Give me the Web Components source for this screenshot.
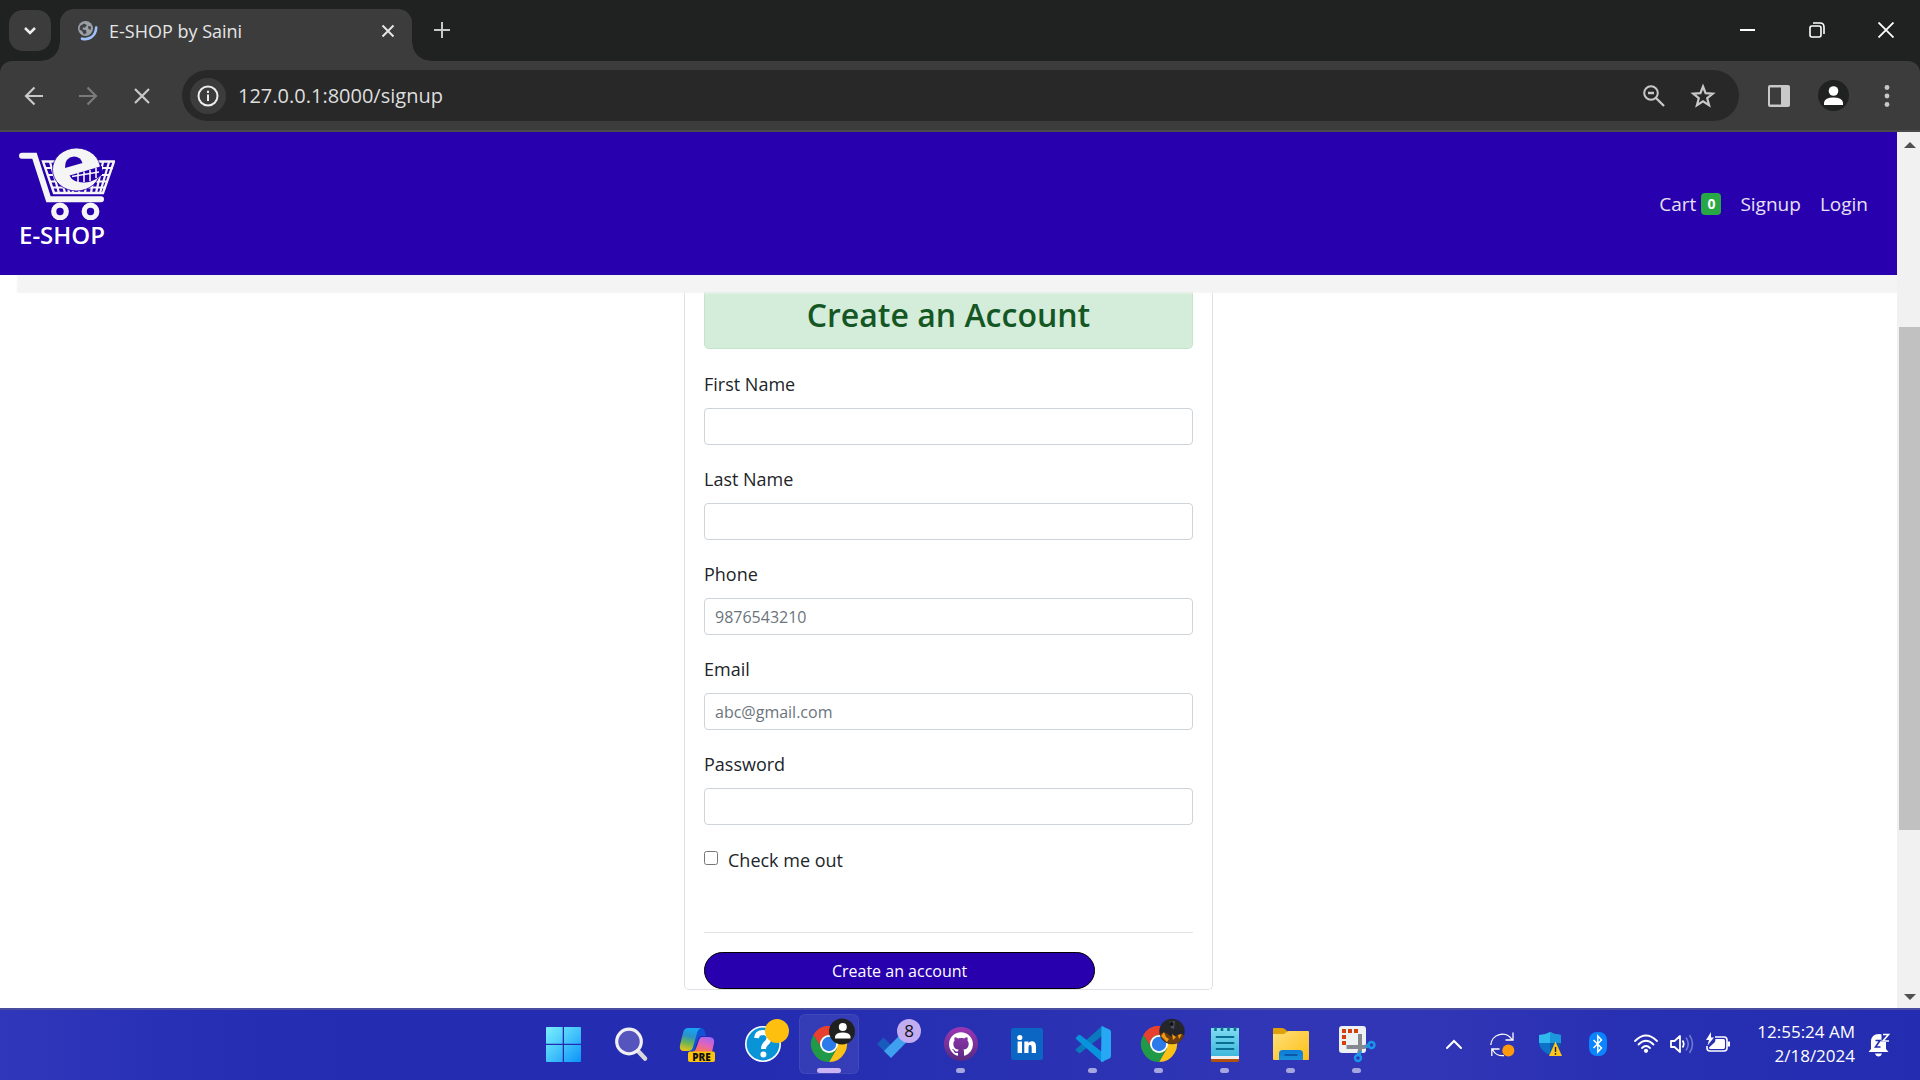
<!DOCTYPE html>
<html lang="en">
<head>
<meta charset="utf-8">
<title>E-SHOP by Saini</title>
<style>
html, body { height: 100%; margin: 0; }
body { font-family: "Open Sans", "Noto Sans", sans-serif; color: #212529; background: #fff; overflow: hidden; }
</style>
</head>
<body>
<desktop-screen></desktop-screen>
<script>
const define = (name, css, html, setup) => customElements.define(name, class extends HTMLElement {
  connectedCallback() {
    if (this.shadowRoot) return;
    const t = document.createElement('template');
    const attrs = k => this.getAttribute(k) || '';
    t.innerHTML = `<style>*{box-sizing:border-box}button{font:inherit;color:inherit;background:none;border:0;padding:0;margin:0}svg{display:block}${css}</style>` +
      (typeof html === 'function' ? html(attrs) : html);
    this.attachShadow({ mode: 'open' }).append(t.content.cloneNode(true));
    if (setup) setup(this);
  }
});

/* ---------- icons ---------- */
const chromeLogo = `
  <path d="M30 30 14.400 21A18 18 0 0 1 45.600 21Z" fill="#e8402f"/>
  <path d="M30 21H45.600A18 18 0 0 1 30 48L37.800 34.500Z" fill="#fbc116"/>
  <path d="M22.200 34.500 14.400 21A18 18 0 0 0 30 48L37.800 34.500Z" fill="#219a48"/>
  <path d="M14.400 21 22.200 34.500 30 21Z" fill="#219a48"/>
  <path d="M14.400 21A18 18 0 0 1 45.600 21H30A9 9 0 0 0 22.200 25.500L21 31Z" fill="#e8402f"/>
  <circle cx="30" cy="30" r="9" fill="#fff"/><circle cx="30" cy="30" r="7.200" fill="#2b7bea"/>`;

const apps = {
  start: `<defs><linearGradient id="g" gradientUnits="userSpaceOnUse" x1="11" y1="13" x2="46" y2="48"><stop stop-color="#7bf0ff"/><stop offset=".5" stop-color="#45c4fb"/><stop offset="1" stop-color="#0a93f8"/></linearGradient></defs>
    <path fill="url(#g)" d="M12 13H27.700V29.700H11V14Q11 13 12 13ZM29 13H45Q46 13 46 14V29.700H29ZM11 31H27.700V48H12Q11 48 11 47ZM29 31H46V47Q46 48 45 48H29Z"/>`,
  search: `<path d="M37 37 44 44.500" stroke="#d8d8dc" stroke-width="4.500" stroke-linecap="round"/><circle cx="28" cy="27.500" r="12.300" fill="#5654bd" stroke="#f0f0f2" stroke-width="3.200"/>`,
  copilot: `<defs><linearGradient id="a" x1=".5" y1="0" x2=".3" y2="1"><stop stop-color="#16a5f5"/><stop offset=".35" stop-color="#2b93c8"/><stop offset=".65" stop-color="#6cb455"/><stop offset="1" stop-color="#e8c51a"/></linearGradient>
    <linearGradient id="b" x1=".7" y1="0" x2=".3" y2="1"><stop stop-color="#a565f5"/><stop offset=".5" stop-color="#e264b8"/><stop offset="1" stop-color="#ff7a4a"/></linearGradient></defs>
    <path d="M28 14H34Q37 14 38 18L39 22H35Q32 22 31 25L27 37H22Z" fill="#1253d6"/>
    <path d="M21 14H34Q31 15 30 19L26 33Q25 37 21 37H17Q12 37 13 31L16 19Q17 14 21 14Z" fill="url(#a)"/>
    <path d="M35 23H42Q48 23 47 29L45 38H26Q29 36 30 32L32 26Q33 23 35 23Z" fill="url(#b)"/>
    <rect x="21" y="37.500" width="27" height="10.500" rx="2" fill="#fcc40d"/><text x="34.500" y="46.500" font-size="10" font-weight="800" text-anchor="middle" fill="#111">PRE</text>`,
  help: `<circle cx="30" cy="30" r="17.200" fill="#0a94d8" stroke="#fff" stroke-width="1.600"/>
    <path d="M23.500 24Q24 18.500 30 18.500Q36 19 36 24Q36 27 33 29.500Q30.500 31.500 30.500 35" fill="none" stroke="#fff" stroke-width="5"/><circle cx="30.400" cy="40.500" r="3" fill="#fff"/>
    <circle cx="44" cy="17" r="12" fill="#ffbf0f"/>`,
  chrome: `${chromeLogo}<circle cx="43" cy="17.500" r="13" fill="#1f2121"/><circle cx="43.800" cy="13" r="4" fill="#fff"/><path d="M36 24.500V22.500Q37 18.500 43.800 18.500Q50.600 18.500 51.500 22.500V24.500Z" fill="#fff"/>`,
  todo: `<path d="M12 30 18.500 23.500 29 34 22.500 40.500Z" fill="#195abd"/><path d="M19 37 41 15 48 21.500 26 44Z" fill="#3fa0f0"/><circle cx="44" cy="17" r="12" fill="#c3adf2"/><text x="44" y="23" font-size="17" text-anchor="middle" fill="#111">8</text>`,
  github: `<defs><linearGradient id="h" x2="0" y2="1"><stop stop-color="#9b37b5"/><stop offset="1" stop-color="#5a2a80"/></linearGradient></defs><circle cx="30" cy="30" r="17" fill="url(#h)"/>
    <g transform="translate(18 18.300) scale(1.500)"><path fill="#fff" d="M8 0C3.580 0 0 3.580 0 8c0 3.540 2.290 6.530 5.470 7.590.400.070.550-.170.550-.380 0-.190-.010-.820-.010-1.490-2.010.370-2.530-.490-2.690-.940-.090-.230-.480-.940-.820-1.130-.280-.150-.680-.520-.010-.530.630-.010 1.080.580 1.230.820.720 1.210 1.870.870 2.330.660.070-.520.280-.870.510-1.070-1.780-.200-3.640-.890-3.640-3.950 0-.870.310-1.590.820-2.150-.080-.200-.360-1.020.080-2.120 0 0 .670-.210 2.200.820.640-.180 1.320-.270 2-.270s1.360.090 2 .270c1.530-1.040 2.200-.820 2.200-.820.440 1.100.160 1.920.080 2.120.510.560.820 1.270.820 2.150 0 3.070-1.870 3.750-3.650 3.950.290.250.540.730.540 1.480 0 1.070-.010 1.930-.010 2.200 0 .210.150.460.550.380A8.010 8.010 0 0 0 16 8c0-4.420-3.580-8-8-8z"/></g>`,
  linkedin: `<rect x="14" y="14" width="32" height="32" rx="2.500" fill="#0b66c3"/><circle cx="22.800" cy="23.500" r="2.600" fill="#fff"/><path fill="#fff" d="M20.600 27.500H25V39H20.600ZM27.300 27.500H31.400V29Q32.500 27.200 34.800 27.200Q39 27.200 39 32.500V39H34.700V33.500Q34.700 30.800 33 30.800Q31.500 30.800 31.500 33.500V39H27.300Z"/>`,
  vscode: `<path d="M13 36.500 15.500 38.800Q16.500 39.500 17.500 38.800L41 20.500V12.500Q39.500 11.800 38.300 12.800L13 35Q12.300 35.800 13 36.500Z" fill="#0b79bd"/>
    <path d="M13 23.500 15.500 21.200Q16.500 20.500 17.500 21.200L41 39.500V47.500Q39.500 48.200 38.300 47.200L13 25Q12.300 24.200 13 23.500Z" fill="#0a93dd"/>
    <path d="M38 48 38.500 12 46.500 15.500Q48 16.200 48 18V42Q48 43.800 46.500 44.500L38.500 48Z" fill="#27a8f4"/>`,
  chromeb: `${chromeLogo}<circle cx="43" cy="17.500" r="12.700" fill="#25262c"/><path d="M31 20Q36 17 40 21T50 20L55 21Q52 30 43 30Q33 29 31 20Z" fill="#6b3d10"/><path d="M32 22 35 18 37 23 40 25 38 28ZM43 20 47 23 44 26ZM49 21 53 20 50 25Z" fill="#f09a16"/><path d="M40 8 46 7 45 15 42 14Z" fill="#4b4d57"/><circle cx="42.500" cy="10" r="2" fill="#111"/>`,
  notepad: `<defs><linearGradient id="n" x2="0" y2="1"><stop stop-color="#7fdcf0"/><stop offset="1" stop-color="#3fb8dc"/></linearGradient></defs>
    <rect x="16" y="40" width="28" height="8" rx="1.500" fill="#b2500f"/><rect x="16" y="38" width="28" height="7" fill="#f0eff0"/><path d="M16 14H44V42H16Z" fill="url(#n)"/>
    <path d="M20.500 13V17M27 13V17M33.500 13V17M40 13V17" stroke="#0f6f90" stroke-width="2.600"/><path d="M21.500 23H38.500M21.500 29H38.500M21.500 35H38.500" stroke="#0a6d92" stroke-width="1.800" stroke-linecap="round"/>`,
  explorer: `<defs><linearGradient id="e" x2="1" y2="1"><stop stop-color="#ffe07c"/><stop offset="1" stop-color="#fdbf14"/></linearGradient><linearGradient id="f" x2="0" y2="1"><stop stop-color="#0d7bd6"/><stop offset="1" stop-color="#1a90da"/></linearGradient></defs>
    <path d="M12 24V15Q12 14 13 14H21Q23 14 24.500 15.500L27 18H40V26H12Z" fill="#e0a00b"/><path d="M12 20H23L27 17H47Q48 17 48 18V45Q48 46 47 46H13Q12 46 12 45Z" fill="url(#e)"/>
    <path d="M18 46V39.500Q18 36 21.500 36H38.500Q42 36 42 39.500V46Z" fill="url(#f)"/><path d="M23.500 41H36.500" stroke="#0a4f9c" stroke-width="1.600"/>`,
  snip: `<rect x="12" y="12" width="27" height="27" rx="3" fill="#eef1f4"/><g fill="#d3400f"><path d="M15 15h4v4h-4zM21 15h4v4h-4zM27 15h4v4h-4zM15 21h4v4h-4zM15 27h4v4h-4z"/></g>
    <path d="M33 20V36L31.500 41M19.500 33H37L41 31.500" fill="none" stroke="#85898f" stroke-width="4"/><circle cx="31" cy="44" r="3" fill="none" stroke="#1898ec" stroke-width="2.400"/><circle cx="44.500" cy="31" r="3" fill="none" stroke="#1898ec" stroke-width="2.400"/><path d="M32 41 34 37M41.500 31.500 38 33" stroke="#1898ec" stroke-width="2.400"/>`
};

const tray = {
  chevron: `<path d="M5 15 12 8 19 15" transform="translate(0 1)" fill="none" stroke="#fff" stroke-width="2" stroke-linecap="round"/>`,
  sync: `<g fill="none" stroke="#fff" stroke-width="1.300"><path d="M.8 13A11.500 11.500 0 0 1 22 7.500M23 .5V8H15.500M14 23.600A11 11 0 0 1 2.500 17.500M1.800 24V17H9.500"/></g><circle cx="18.300" cy="18.500" r="6" fill="#ff9a0c"/>`,
  shield: `<path d="M1 3Q7 3 12 0Q17 3 23 3V11H1Z" fill="#2fb9ee"/><path d="M12 0Q17 3 23 3V11H12Z" fill="#1b97dd"/><path d="M1 11H12V23Q2 19 1 11Z" fill="#0b72c8"/><path d="M12 11H23Q22 19 12 23Z" fill="#0a5bb0"/><path d="M17.500 9.500 24 24H11Z" fill="#fdc51a"/><path d="M17.500 15V20M17.500 21V22.800" stroke="#222" stroke-width="1.400"/>`,
  bluetooth: `<rect x="3" y="0" width="18" height="24" rx="8" fill="#0a84ff"/><path d="M7.500 8 15.500 16 11.800 20V4L15.500 8 7.500 16" fill="none" stroke="#fff" stroke-width="1.500"/>`,
  wifi: `<g fill="none" stroke="#fff" stroke-width="1.800" stroke-linecap="round"><path d="M1 9Q12 -2 23 9M4.500 12.500Q12 5 19.500 12.500M8 16Q12 12 16 16"/></g><circle cx="12" cy="18.800" r="2.100" fill="#fff"/>`,
  volume: `<path d="M1 9H4.500L10 4V20L4.500 15H1Z" fill="none" stroke="#fff" stroke-width="1.800" stroke-linejoin="round"/><path d="M12.500 8.500Q15 12 12.500 15.500" fill="none" stroke="#fff" stroke-width="1.700"/><path d="M16 5.500Q20.500 12 16 18.500M19.500 3Q25.500 12 19.500 21" fill="none" stroke="#7077cf" stroke-width="1.600"/>`,
  battery: `<path d="M9 5H18Q21 5 21 8V16Q21 19 18 19H4Q1 19 1 16V14" fill="none" stroke="#fff" stroke-width="1.600"/><path d="M21.500 9.500H24V14.500H21.500Z" fill="#fff"/><path d="M9.500 7H17.500Q19 7 19 9V15Q19 17 17.500 17H4.500Q3 17 3 15.500L9 10Z" fill="#fff"/><path d="M5 0 0 8H3L1.500 13.500 8 5.500H5Z" fill="#fff"/>`,
  bell: `<path d="M4 17V10Q4 2 12 2Q19 2 19 10V17L21.500 20H1.500Z" fill="#fff"/><path d="M8 21.500H15Q14 24.500 11.500 24.500Q9 24.500 8 21.500Z" fill="#fff"/><path d="M8.500 8.500H13L8.500 15H13.500" fill="none" stroke="#242db1" stroke-width="1.600"/><path d="M14.500 0H24V10H14.500Z" fill="#242db1"/><path d="M16 2.500H21.500L16 9H22" fill="none" stroke="#fff" stroke-width="1.600"/>`
};

/* ---------- browser frame ---------- */
define('tab-strip', `
  :host{display:flex;height:61px;background:#202221;color:#e6e6e6;font-size:18px}
  .list{width:42px;height:41px;margin:10px 9px 0;border-radius:14px;background:#3c3c3c;display:grid;place-items:center}
  .tab{position:relative;display:flex;align-items:center;width:352px;height:52px;margin-top:9px;padding:0 12px 8px 18px;background:#3c3c3c;border-radius:14px 14px 0 0;gap:11px}
  .tab::before,.tab::after{content:"";position:absolute;bottom:0;width:18px;height:18px}
  .tab::before{right:100%;background:radial-gradient(circle at 0 0,transparent 17px,#3c3c3c 18px)}
  .tab::after{left:100%;background:radial-gradient(circle at 100% 0,transparent 17px,#3c3c3c 18px)}
  .title{flex:1;white-space:nowrap}
  .tab button,.new{width:24px;height:24px;display:grid;place-items:center}
  .new{margin:18px 0 0 18px}
  .win{margin-left:auto;display:flex}
  .win button{width:69px;height:60px;display:grid;place-items:center}`, `
  <button class="list" aria-label="Search tabs"><svg width="14" height="10"><path d="M2 2 7 7 12 2" fill="none" stroke="#eee" stroke-width="2.500"/></svg></button>
  <div class="tab">
    <svg width="20" height="20" viewBox="0 0 20 20"><circle cx="7.500" cy="7.500" r="7.500" fill="#9aa0a6"/><path d="M2 5 6 2.500 9 4 7 6.500 5 6.500 4.500 8.500 8 9 8.500 12 6 13.500 4 10 1.500 8.500ZM10 5 13 5.500 12.500 9 10.500 8Z" fill="#3f4246"/><path d="M18.200 6.500Q18 13 13 16.500Q8.500 19 4 17.700" fill="none" stroke="#9fc2fb" stroke-width="2.600" stroke-linecap="round"/></svg>
    <span class="title">E-SHOP by Saini</span>
    <button aria-label="Close tab"><svg width="14" height="14"><path d="M1.500 1.500 12.500 12.500M12.500 1.500 1.500 12.500" stroke="#e6e6e6" stroke-width="2"/></svg></button>
  </div>
  <button class="new" aria-label="New tab"><svg width="16" height="16"><path d="M8 0V16M0 8H16" stroke="#c8c8c8" stroke-width="2"/></svg></button>
  <div class="win">
    <button aria-label="Minimize"><svg width="16" height="16"><path d="M0 8H15" stroke="#fff" stroke-width="2"/></svg></button>
    <button aria-label="Restore"><svg width="16" height="16"><rect x="1" y="4" width="11" height="11" rx="2" fill="none" stroke="#fff" stroke-width="1.600"/><path d="M4 1H11Q15 1 15 5V12" fill="none" stroke="#fff" stroke-width="1.600"/></svg></button>
    <button aria-label="Close"><svg width="16" height="16"><path d="M.5.5 15.500 15.500M15.500.5.5 15.500" stroke="#fff" stroke-width="1.800"/></svg></button>
  </div>`);

define('tool-bar', `
  :host{display:block;background:#202221}
  .bar{display:flex;align-items:center;height:71px;padding:0 6px 0 7px;background:#3c3c3c;border-bottom:2px solid #4a4a4a;border-radius:12px 12px 0 0}
  .b{width:54px;height:50px;display:grid;place-items:center}
  .omni{flex:1;display:flex;align-items:center;height:51px;margin:0 13px;padding:0 12px 0 8px;border-radius:26px;background:#282828}
  .info{width:36px;height:36px;border-radius:50%;background:#3c3c3c;display:grid;place-items:center;margin-right:12px}
  input{flex:1;min-width:0;border:0;padding:0;background:none;color:#dedede;font:20px "Open Sans",sans-serif;outline:0}
  .o{width:49px;height:36px;display:grid;place-items:center}`, `
  <div class="bar">
  <button class="b" aria-label="Back"><svg width="20" height="20"><path d="M19 10H2M10.500 1.500 2 10 10.500 18.500" fill="none" stroke="#c8c8c8" stroke-width="2.200"/></svg></button>
  <button class="b" aria-label="Forward"><svg width="20" height="20"><path d="M1 10H18M9.500 1.500 18 10 9.500 18.500" fill="none" stroke="#7a7a7a" stroke-width="2.200"/></svg></button>
  <button class="b" aria-label="Stop"><svg width="16" height="16"><path d="M1 1 15 15M15 1 1 15" stroke="#c8c8c8" stroke-width="2.200"/></svg></button>
  <div class="omni">
    <button class="info" aria-label="Site information"><svg width="22" height="22"><circle cx="11" cy="11" r="9.500" fill="none" stroke="#eee" stroke-width="2"/><path d="M11 9.500V16M11 5.800V8" stroke="#eee" stroke-width="2"/></svg></button>
    <input type="text" aria-label="Address" value="127.0.0.1:8000/signup">
    <button class="o" aria-label="Zoom"><svg width="24" height="24"><circle cx="9" cy="9" r="6.800" fill="none" stroke="#c8c8c8" stroke-width="2"/><path d="M6 9H12M14 14 22 22" stroke="#c8c8c8" stroke-width="2.300"/></svg></button>
    <button class="o" aria-label="Bookmark"><svg width="26" height="26"><path d="M13 3.500 15.600 10.200 22.800 10.600 17.200 15.200 19.100 22.200 13 18.300 6.900 22.200 8.800 15.200 3.200 10.600 10.400 10.200Z" fill="none" stroke="#c8c8c8" stroke-width="2.200"/></svg></button>
  </div>
  <button class="b" aria-label="Side panel"><svg width="22" height="22"><rect width="22" height="22" rx="2" fill="#c8c8c8"/><path d="M2 2.500H13V19.500H2Z" fill="#3c3c3c"/></svg></button>
  <button class="b" aria-label="Profile"><svg width="31" height="31"><circle cx="15.500" cy="15.500" r="15.500" fill="#202221"/><circle cx="15.500" cy="11" r="4.800" fill="#fff"/><path d="M6 25V22.500Q7 17.500 15.500 17.500Q24 17.500 25 22.500V25Z" fill="#fff"/></svg></button>
  <button class="b" aria-label="Menu"><svg width="6" height="24" fill="#c8c8c8"><circle cx="3" cy="3.500" r="2.400"/><circle cx="3" cy="12" r="2.400"/><circle cx="3" cy="20.500" r="2.400"/></svg></button>
  </div>`);

define('scroll-rail', `
  :host{display:flex;flex-direction:column;width:23px;background:#f1f1f1;padding-left:2px}
  .a{height:21px;display:grid;place-items:end center;padding-bottom:5px}
  .a.d{place-items:start center;padding:7px 0 0}
  .pre{flex:174}.thumb{flex:503;background:#c1c1c1}.post{flex:157}`, `
  <div class="a"><svg width="12" height="6"><path d="M0 6 6 0 12 6Z" fill="#505050"/></svg></div>
  <div class="pre"></div><div class="thumb"></div><div class="post"></div>
  <div class="a d"><svg width="12" height="6"><path d="M0 0 6 6 12 0Z" fill="#505050"/></svg></div>`);

/* ---------- shop page ---------- */
define('shop-header', `
  :host{display:flex;align-items:center;justify-content:space-between;position:relative;z-index:1;height:143px;padding:0 29px 10px 19px;background:#2800ad;box-shadow:17px 18px 2px #f4f4f4}
  a{color:inherit;text-decoration:none}
  .brand{color:#fff;font-size:24px;font-weight:600;line-height:30px}
  nav{display:flex;gap:19px;padding-top:10px;color:#e6e2f6;font-size:19px;line-height:28px}
  nav a{display:flex;align-items:center}
  b{display:block;margin-left:5px;width:20px;height:22px;border-radius:4px;background:#28a745;color:#fff;font-size:14px;line-height:22px;text-align:center}`, `
  <a class="brand" href="#"><svg width="96" height="72" viewBox="0 0 96 72">
    <path d="M24 13.500H95L84 45H35Z" fill="none" stroke="#f5f5f5" stroke-width="2.400"/>
    <path d="M26 20H94M28 27H91M31 33.500H89M33 39.500H87M31 14 40 45M38 14 46 45M46 14 50 45M54 14V45M62 14 60 45M70 14 66 45M77 14 72 45M84 14 77 45M90 14 81 45" stroke="#f5f5f5" stroke-width="2.200" fill="none"/>
    <ellipse cx="57.500" cy="21.500" rx="24" ry="21.500" fill="#f5f5f5" stroke="#2800ad" stroke-width=".8"/>
    <path d="M46 20Q45.500 9.500 55 8.500Q61.500 8.500 63.500 15Z" fill="#2800ad"/>
    <path d="M50.500 27.500 83 18V27L80.500 28.500Q74 34 66 34.500Q54 35 50.500 27.500Z" fill="#2800ad"/>
    <path d="M53 28.500 80 24M59 25V34M65 23.500V34M71 22V33M77 20V30" stroke="#f5f5f5" stroke-width="1.600"/>
    <path d="M3 7.800H15.500L29.500 51.300H82" fill="none" stroke="#f5f5f5" stroke-width="6" stroke-linecap="round"/>
    <circle cx="41" cy="63.500" r="6.300" fill="none" stroke="#f5f5f5" stroke-width="5.200"/><circle cx="71.500" cy="63.500" r="6.300" fill="none" stroke="#f5f5f5" stroke-width="5.200"/>
  </svg>E-SHOP</a>
  <nav><a href="#">Cart<b>0</b></a><a href="#">Signup</a><a href="#">Login</a></nav>`);

define('form-field', `
  :host{display:block;margin-bottom:21px}
  label{display:block;font-size:18px;line-height:27px;margin-bottom:10px}
  input{display:block;width:100%;height:37px;padding:0 10px;border:1px solid #ced4da;border-radius:4px;background:#fff;color:#495057;font:16px "Open Sans",sans-serif}
  input::placeholder{color:#6c757d;opacity:1}`,
  a => `<label for="f">${a('label')}</label><input id="f" type="${a('type') || 'text'}" placeholder="${a('hint')}">`);

define('signup-card', `
  :host{display:block;width:529px;margin:0 auto;padding:0 19px;border:1px solid #dee2e6;border-top:0;border-radius:0 0 5px 5px}
  h1{display:flex;align-items:center;justify-content:center;height:74px;margin:0 0 22px;padding:6px 0 0;border:1px solid #c3e6cb;border-top:0;border-radius:0 0 5px 5px;background:#d4edda;color:#155724;font-size:32px;line-height:40px;font-weight:600}
  .check{display:flex;align-items:center;gap:10px;font-size:18px;line-height:28px}
  .check input{width:14px;height:14px;margin:0 0 4px}
  hr{border:0;border-top:1px solid #e2e3e5;margin:58px 0 19px}
  .go{display:block;width:80%;height:37px;border:1px solid #000;border-radius:19px;background:#2800ad;color:#fff;font-size:16px}`, `
  <form>
    <h1>Create an Account</h1>
    <form-field label="First Name"></form-field>
    <form-field label="Last Name"></form-field>
    <form-field label="Phone" type="tel" hint="9876543210"></form-field>
    <form-field label="Email" type="email" hint="abc@gmail.com"></form-field>
    <form-field label="Password" type="password"></form-field>
    <div class="check"><input type="checkbox" id="c"><label for="c">Check me out</label></div>
    <hr>
    <button class="go" type="button">Create an account</button>
  </form>`);

define('page-view', `
  :host{display:flex;flex:1;min-height:0;background:#fff}
  .page{flex:1;overflow:hidden}`, `
  <div class="page"><shop-header></shop-header><signup-card></signup-card></div><scroll-rail></scroll-rail>`);

/* ---------- taskbar ---------- */
define('app-icon', `
  :host{display:block;width:66px}
  button{position:relative;display:block;width:60px;height:60px;margin:0 auto;border-radius:6px}
  :host([state=active]) button{background:#ffffff12;box-shadow:inset 0 0 0 1px #ffffff10}
  button::after{position:absolute;left:50%;bottom:1px;height:5px;border-radius:3px}
  :host([state]) button::after{content:"";width:9px;margin-left:-5px;background:#a5a5e0}
  :host([state=active]) button::after{width:24px;margin-left:-12px;background:#c9b3f5}`,
  a => `<button aria-label="${a('name')}"><svg width="60" height="60" viewBox="0 0 60 60">${apps[a('name')]}</svg></button>`);

define('tray-icon', `:host{display:grid;place-items:center;width:24px}`,
  a => `<svg width="24" height="24" viewBox="0 0 24 24" overflow="visible">${tray[a('name')]}</svg>`);

define('task-bar', `
  :host{display:grid;grid-template-columns:1fr auto 1fr;align-items:center;box-sizing:border-box;height:72px;padding:0 0 2px 2px;border-top:2px solid #484d9f;color:#fff;
    background:linear-gradient(90deg,#3037ba,#272fb5 10%,#242db1 18%,#242db1 40%,#2a32b3 55%,#3036b6 66%,#3136b6 74%,#272fb2 86%,#242db1)}
  .apps{grid-column:2;display:flex}
  .tray{display:flex;justify-content:flex-end;align-items:center;padding-right:29px;gap:12px}
  .wide{display:flex;gap:24px;margin-right:12px}
  time{width:101px;margin:0 0 0 12px;text-align:right;font-size:17px;line-height:24px;white-space:nowrap}`, `
  <div class="apps">
    <app-icon name="start"></app-icon><app-icon name="search"></app-icon><app-icon name="copilot"></app-icon><app-icon name="help"></app-icon>
    <app-icon name="chrome" state="active"></app-icon><app-icon name="todo"></app-icon><app-icon name="github" state="open"></app-icon><app-icon name="linkedin"></app-icon>
    <app-icon name="vscode" state="open"></app-icon><app-icon name="chromeb" state="open"></app-icon><app-icon name="notepad" state="open"></app-icon>
    <app-icon name="explorer" state="open"></app-icon><app-icon name="snip" state="open"></app-icon>
  </div>
  <div class="tray">
    <div class="wide"><tray-icon name="chevron"></tray-icon><tray-icon name="sync"></tray-icon><tray-icon name="shield"></tray-icon><tray-icon name="bluetooth"></tray-icon></div>
    <tray-icon name="wifi"></tray-icon><tray-icon name="volume"></tray-icon><tray-icon name="battery"></tray-icon>
    <time>12:55:24 AM<br>2/18/2024</time>
    <tray-icon name="bell"></tray-icon>
  </div>`);

define('desktop-screen', `:host{display:flex;flex-direction:column;height:100vh}`,
  `<tab-strip></tab-strip><tool-bar></tool-bar><page-view></page-view><task-bar></task-bar>`);
</script>
</body>
</html>
